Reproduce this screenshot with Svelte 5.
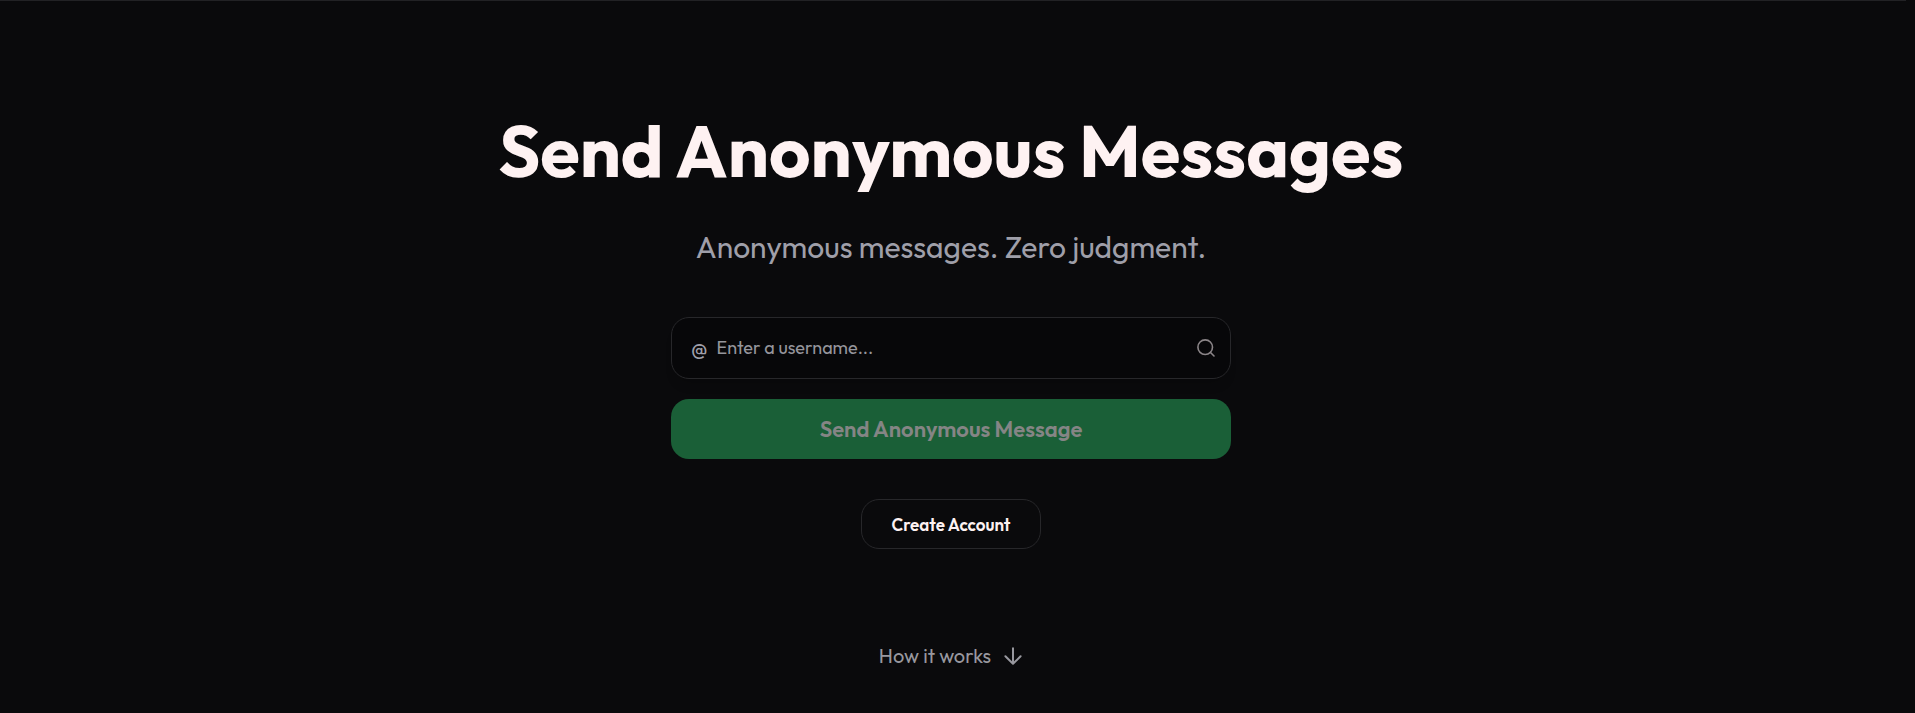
<script>
  let username = $state('');
</script>

<div class="page">
  <header class="topline"></header>
  <main>
    <h1>Send Anonymous Messages</h1>
    <p class="tagline">Anonymous messages. Zero judgment.</p>

    <form onsubmit={(e) => e.preventDefault()}>
      <label class="field">
        <span class="at">@</span>
        <input type="text" bind:value={username} placeholder="Enter a username..." aria-label="Username" />
        <svg width="20" height="20" viewBox="0 0 20 20" fill="none" stroke="currentColor" stroke-width="1.6" stroke-linecap="round" aria-hidden="true">
          <circle cx="9.2" cy="9.2" r="7.3" />
          <path d="M14.5 14.5 L18 18" />
        </svg>
      </label>
      <button class="send" type="submit" disabled={!username}>Send Anonymous Message</button>
    </form>

    <button class="create" type="button">Create Account</button>

    <a class="how" href="#how">
      How it works
      <svg width="20" height="20" viewBox="0 0 20 20" fill="none" stroke="currentColor" stroke-width="2" stroke-linecap="round" stroke-linejoin="round" aria-hidden="true">
        <path d="M10 2.2V17.6M2.4 10.2L10 17.8L17.6 10.2" />
      </svg>
    </a>
  </main>
</div>

<style>
  :global(body) {
    margin: 0;
    background: #0a0a0c;
  }
  .page {
    font-family: Outfit, Lato, sans-serif;
    color: #fef2f2;
  }
  .topline {
    margin-right: 9px;
    border-top: 1px solid #222225;
  }
  main {
    display: flex;
    flex-direction: column;
    align-items: center;
    padding: 110px 37px 40px 24px;
  }
  h1 {
    margin: 0;
    font-size: 72px;
    line-height: 80px;
    font-weight: 700;
    text-align: center;
  }
  .tagline {
    margin: 36px 0 0;
    font-size: 30px;
    line-height: 40px;
    color: #9f9fa9;
    text-align: center;
  }
  form {
    display: flex;
    flex-direction: column;
    gap: 20px;
    width: 100%;
    max-width: 560px;
    margin-top: 50px;
  }
  .field {
    display: flex;
    align-items: center;
    box-sizing: border-box;
    height: 62px;
    padding: 0 14px 0 19px;
    border: 1px solid #27272a;
    border-radius: 18px;
    background: #070709;
    color: #8b8588;
    box-shadow: 0 10px 12px -6px rgb(0 0 0 / 0.2);
  }
  .at {
    padding-top: 2px;
    font-size: 22px;
    color: #9f9fa9;
  }
  input {
    flex: 1;
    min-width: 0;
    margin-left: 9px;
    padding: 0 0 2px;
    border: 0;
    outline: 0;
    background: none;
    font: inherit;
    font-size: 18px;
    color: #fef2f2;
  }
  input::placeholder {
    color: #95959c;
    opacity: 1;
  }
  .send {
    height: 60px;
    border: 0;
    border-radius: 18px;
    background: #1a5f37;
    font: inherit;
    font-size: 22px;
    font-weight: 600;
    color: #858585;
  }
  .create {
    height: 50px;
    margin-top: 40px;
    padding: 0 30px;
    border: 1px solid #27272a;
    border-radius: 18px;
    background: none;
    font: inherit;
    font-size: 17px;
    font-weight: 600;
    color: #fef2f2;
  }
  .how {
    display: flex;
    align-items: center;
    gap: 12px;
    margin-top: 92px;
    font-size: 20px;
    line-height: 30px;
    color: #98989f;
    text-decoration: none;
  }
</style>
